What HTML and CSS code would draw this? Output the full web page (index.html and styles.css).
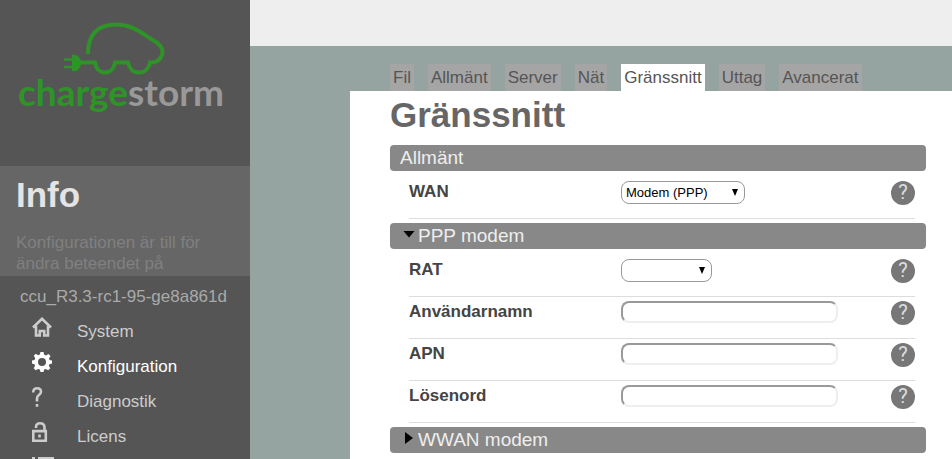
FILE: index.html
```html
<!DOCTYPE html>
<html lang="sv">
<head>
<meta charset="utf-8">
<title>Gränssnitt</title>
<link rel="stylesheet" href="styles.css">
</head>
<body>
<div class="app">
  <aside class="sidebar">
    <a class="logo" href="#">
      <svg class="logo-car" width="104" height="56" viewBox="0 0 104 56" fill="none" aria-hidden="true">
        <path d="M25 33C25 14 34 4 52 3.500C67 3 76 10 88 18C98 23 101 28 99 34C97 39 93 42 87 41.500C86 47 82 51.500 76 51.500C70 51.500 66 47 65 41.500H52C51 47 48 51.500 42 51.500C36 51.500 33 47 32 41.500H17" stroke="#2f9427" stroke-width="4"/>
        <path d="M9 34C14 33 17 36 18.500 41.500C17 48 14 51 9 50Z" fill="#2f9427"/>
        <path d="M1 38.500H10M1 46H10" stroke="#2f9427" stroke-width="2.500"/>
      </svg>
      <span class="logo-name">charge<span class="logo-storm">storm</span></span>
    </a>
    <section class="info">
      <h2>Info</h2>
      <p>Konfigurationen är till för ändra beteendet på</p>
    </section>
    <p class="version">ccu_R3.3-rc1-95-ge8a861d</p>
    <nav class="menu">
      <a href="#"><svg width="20" height="20" viewBox="0 0 20 20" fill="none" stroke="currentColor" stroke-width="2.600"><path d="M1 10.500L10 1.800L19 10.500M4 9V18.500H7.800V14H12.200V18.500H16V9"/></svg>System</a>
      <a href="#" class="current"><svg width="20" height="20" viewBox="0 0 20 20"><path fill="currentColor" fill-rule="evenodd" d="M8.500 0H11.500L12.200 2.800L14 3.500L16.500 2L18.500 4L17 6.500L17.600 8L20 8.600V11.500L17.500 12.200L16.800 13.800L18.300 16.300L16.200 18.300L13.800 16.900L12.200 17.600L11.500 20H8.500L7.800 17.600L6.200 16.900L3.700 18.300L1.700 16.200L3.100 13.800L2.400 12.200L0 11.500V8.500L2.500 7.900L3.200 6.300L1.800 3.800L3.800 1.800L6.200 3.200L7.800 2.500ZM10 6A4 4 0 1 0 10 14A4 4 0 1 0 10 6Z"/></svg>Konfiguration</a>
      <a href="#"><svg width="20" height="20" viewBox="0 0 20 20" fill="none" stroke="currentColor" stroke-width="2.600"><path d="M1.300 5.500V4.500C1.300 2.500 2.800 1.300 5 1.300C7.500 1.300 9 2.500 9 4.800C9 8 5 7.500 5 11.500V14.500M5 17V19.800"/></svg>Diagnostik</a>
      <a href="#"><svg width="20" height="20" viewBox="0 0 20 20" fill="none" stroke="currentColor" stroke-width="2.600"><path d="M1.300 9.100H13.800V18.700H1.300ZM4 6V5C4 2.500 5.500 1.300 8 1.300C11 1.300 12.500 3 12.500 5.500V9M7.500 12.500V15.500"/></svg>Licens</a>
      <a href="#" aria-label="Lista"><svg width="22" height="20" viewBox="0 0 22 20" fill="none" stroke="currentColor" stroke-width="3"><path d="M0 1.500H3M6 1.500H22M0 8.500H3M6 8.500H22"/></svg></a>
    </nav>
  </aside>
  <div class="page">
    <header class="topbar"></header>
    <nav class="tabs">
      <a href="#">Fil</a>
      <a href="#">Allmänt</a>
      <a href="#">Server</a>
      <a href="#">Nät</a>
      <a href="#" class="active">Gränssnitt</a>
      <a href="#">Uttag</a>
      <a href="#">Avancerat</a>
    </nav>
    <main class="content">
      <h1>Gränssnitt</h1>
      <h2 class="bar">Allmänt</h2>
      <div class="row">
        <label for="wan">WAN</label>
        <div class="field"><span class="drop"><select id="wan" class="wan"><option>Modem (PPP)</option></select></span></div>
        <button class="help" type="button">?</button>
      </div>
      <h2 class="bar"><button class="toggle open" type="button" aria-expanded="true">PPP modem</button></h2>
      <div class="row">
        <label for="rat">RAT</label>
        <div class="field"><span class="drop"><select id="rat" class="rat"><option></option></select></span></div>
        <button class="help" type="button">?</button>
      </div>
      <div class="row">
        <label for="user">Användarnamn</label>
        <div class="field"><input id="user" type="text"></div>
        <button class="help" type="button">?</button>
      </div>
      <div class="row">
        <label for="apn">APN</label>
        <div class="field"><input id="apn" type="text"></div>
        <button class="help" type="button">?</button>
      </div>
      <div class="row">
        <label for="pass">Lösenord</label>
        <div class="field"><input id="pass" type="password"></div>
        <button class="help" type="button">?</button>
      </div>
      <h2 class="bar"><button class="toggle" type="button" aria-expanded="false">WWAN modem</button></h2>
    </main>
  </div>
</div>
</body>
</html>
```
FILE: styles.css
```css
* { box-sizing: border-box; }
body {
  margin: 0;
  height: 100vh;
  overflow: hidden;
  font: 17px/21px "Liberation Sans", Arial, sans-serif;
  color: #444;
}
h1, h2, p { margin: 0; }
a { color: inherit; text-decoration: none; }
button, select, input { font-family: inherit; }

.app { display: flex; height: 100vh; }

.sidebar {
  flex: 0 0 250px;
  overflow: hidden;
  background: #555;
  color: #ccc;
}
.logo {
  display: flex;
  flex-direction: column;
  height: 166px;
  padding: 21px 0 0 18px;
}
.logo-car { margin-left: 45px; }
.logo-name {
  font: 700 37px/30px Lato, "Open Sans", sans-serif;
  color: #2f9427;
}
.logo-storm { color: #999; }

.info {
  height: 110px;
  padding: 8px 16px 0;
  background: #666;
  color: #808080;
}
.info h2 {
  margin-bottom: 16px;
  font-size: 35px;
  line-height: 42px;
  color: #e4e4e4;
}
.version { padding: 10px 20px 7px; color: #aaa; }

.menu a {
  display: flex;
  height: 35px;
  padding: 3px 0 0 32px;
  line-height: 30px;
}
.menu svg { margin-right: 25px; }
.menu .current { color: #fff; }

.page {
  flex: 1;
  display: flex;
  flex-direction: column;
  min-width: 0;
  background: #95a3a1;
}
.topbar { height: 46px; background: #eee; }
.tabs {
  display: flex;
  gap: 14px;
  padding: 18px 0 0 140px;
}
.tabs a {
  padding: 3px 3px;
  background: #a5a5a5;
  color: #555;
}
.tabs .active { background: #fff; }

.content {
  flex: 1;
  margin-left: 100px;
  padding: 3px 26px 0 40px;
  background: #fff;
}
h1 {
  margin-bottom: 9px;
  font-size: 35px;
  line-height: 42px;
  color: #666;
}
.bar {
  margin: 4px 0 6px;
  padding: 0 10px;
  border-radius: 4px;
  background: #888;
  color: #eee;
  font-size: 19px;
  font-weight: normal;
  line-height: 26px;
}
.toggle {
  display: flex;
  align-items: center;
  padding: 0;
  border: 0;
  background: none;
  color: inherit;
  font-size: 19px;
  line-height: 26px;
}
.toggle::before {
  content: "";
  width: 8px;
  height: 12px;
  margin: 0 5px 4px;
  background: #000;
  clip-path: polygon(0 0, 100% 50%, 0 100%);
}
.toggle.open::before {
  width: 12px;
  height: 7px;
  margin: 0 3px 4px;
  clip-path: polygon(0 0, 100% 0, 50% 100%);
}

.row {
  display: grid;
  grid-template-columns: 212px 1fr 24px;
  align-items: start;
  height: 42px;
  margin: 0 11px 0 19px;
  padding-top: 4px;
  border-bottom: 1px solid #ddd;
}
.row label { font-weight: bold; }
.field { display: flex; }
.drop { display: grid; align-items: center; }
.drop::after {
  content: "";
  grid-area: 1 / 1;
  justify-self: end;
  width: 6px;
  height: 7px;
  margin-right: 7px;
  background: #000;
  clip-path: polygon(0 0, 100% 0, 50% 100%);
  pointer-events: none;
}
select {
  grid-area: 1 / 1;
  appearance: none;
  height: 23px;
  padding: 0 4px;
  border: 1px solid #999;
  border-radius: 8px;
  background: #fff;
  color: #000;
  font-size: 13px;
}
.wan { width: 124px; }
.rat { width: 91px; }
input {
  width: 217px;
  height: 22px;
  border: 2px solid;
  border-color: #999 #eee #eee #999;
  border-radius: 8px;
  background: #fff;
}
.help {
  width: 24px;
  height: 24px;
  padding: 0 0 1px;
  border: 0;
  border-radius: 50%;
  background: #777;
  color: #ddd;
  font-family: Roboto, sans-serif;
  font-size: 20px;
  line-height: 23px;
}
```
